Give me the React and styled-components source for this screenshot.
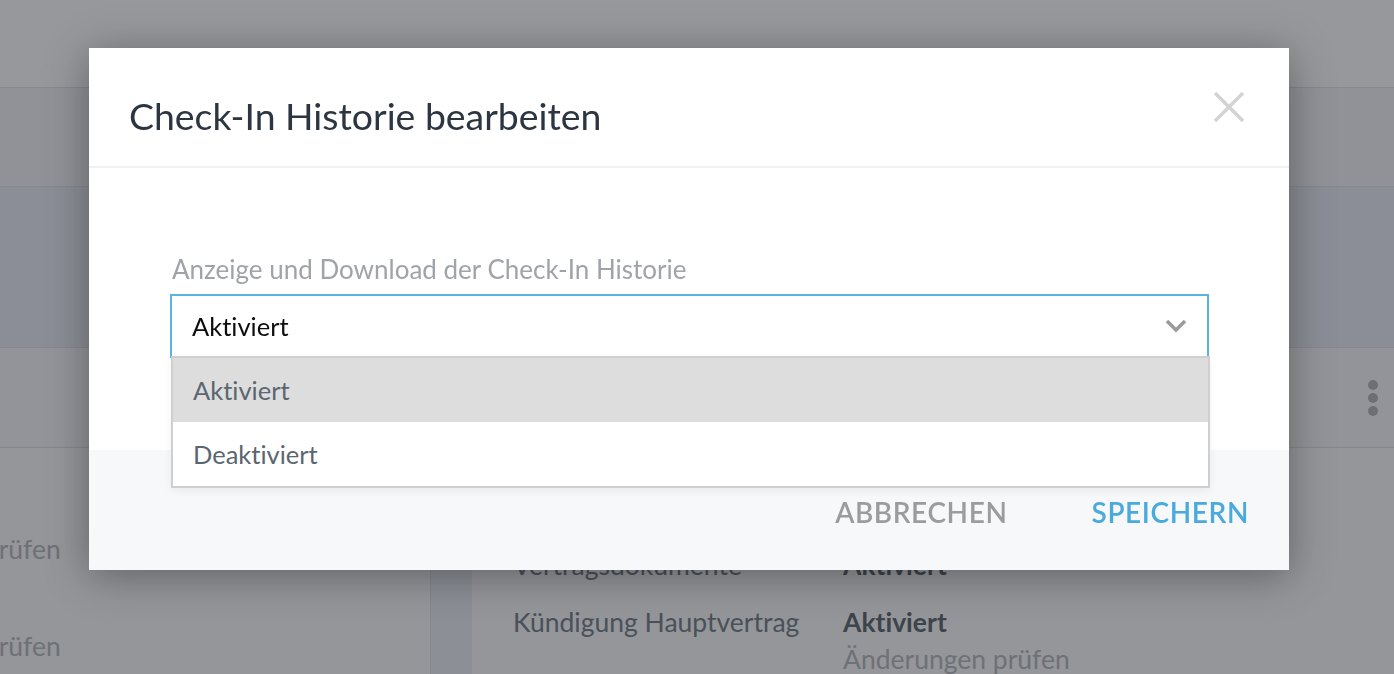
import React from 'react';
import styled, { createGlobalStyle } from 'styled-components';

const GlobalStyle = createGlobalStyle`
  html, body {
    margin: 0;
    padding: 0;
    height: 100%;
    overflow: hidden;
  }
  body {
    font-family: Lato, "Liberation Sans", sans-serif;
    font-variant-ligatures: none;
    background: #fafafa;
  }
`;

const Page = styled.div`
  width: 1394px;
  height: 674px;
  overflow: hidden;
  display: flex;
  flex-direction: column;
  background: #fafafa;
`;

const Band = styled.div`
  flex: none;
  height: ${(p) => p.h}px;
  background: ${(p) => p.bg};
  border-bottom: 1px solid #dedee2;
  display: flex;
  align-items: center;
  justify-content: flex-end;
  padding-right: 16px;
  box-sizing: border-box;
`;

const Dots = styled.div`
  display: flex;
  flex-direction: column;
  gap: 3px;

  span {
    width: 10px;
    height: 10px;
    border-radius: 50%;
    background: #acadaf;
  }
`;

const Content = styled.div`
  flex: 1;
  display: grid;
  grid-template-columns: 430px 42px 1fr;
  font-size: 26.5px;
`;

const LeftCol = styled.div`
  overflow: hidden;
  padding-top: 84px;
`;

/* the left table is scrolled sideways, only the end of its cells shows */
const Scrolled = styled.div`
  margin-left: -166px;
  display: flex;
  flex-direction: column;
  gap: 63px;
`;

const Muted = styled.div`
  line-height: 34px;
  color: #afb0b3;
  white-space: nowrap;
`;

const Strip = styled.div`
  background: #eaecf1;
  border-left: 1px solid #dcdee3;
`;

const RightCol = styled.div`
  padding: 100px 0 0 41px;
  display: flex;
  flex-direction: column;
  gap: 23px;
`;

const InfoRow = styled.div`
  display: grid;
  grid-template-columns: 330px 1fr;
  line-height: 34px;
  white-space: nowrap;
`;

const InfoLabel = styled.div`
  color: #697078;
`;

const InfoValue = styled.div`
  color: #4f565c;
  font-weight: 700;
`;

const SubLink = styled.div`
  margin-top: 3px;
  color: #afb0b3;
  font-weight: 400;
`;

const Backdrop = styled.div`
  position: fixed;
  inset: 0;
  background: rgba(45, 50, 58, 0.5);
`;

const Modal = styled.div`
  position: fixed;
  left: 89px;
  top: 48px;
  width: 1200px;
  background: #fff;
  box-shadow: 0 6px 40px rgba(0, 0, 0, 0.35);
`;

const Header = styled.div`
  display: flex;
  align-items: flex-start;
  justify-content: space-between;
  height: 120px;
  padding: 0 44px 0 40px;
  box-sizing: border-box;
  border-bottom: 2px solid #f1f1f1;
`;

const Title = styled.h2`
  margin: 48px 0 0;
  font-size: 37.4px;
  font-weight: 400;
  color: #2c3540;
  line-height: 40px;
`;

const CloseButton = styled.button`
  border: 0;
  background: none;
  padding: 0;
  margin-top: 43px;
  width: 32px;
  height: 32px;
  cursor: pointer;
`;

const Body = styled.div`
  padding: 86px 80px 92px 81px;
`;

const FieldLabel = styled.div`
  font-size: 26px;
  line-height: 30px;
  color: #a0a3a8;
  margin-bottom: 10px;
  padding-left: 2px;
`;

const SelectBox = styled.div`
  position: relative;
  height: 64px;
  box-sizing: border-box;
  border: 2px solid #5ab4e0;
  display: flex;
  align-items: center;
  justify-content: space-between;
  padding: 0 20px;
  font-size: 25.5px;
  color: #0d0d0d;
`;

const Menu = styled.div`
  position: absolute;
  left: -1px;
  right: -3px;
  top: 100%;
  background: #fff;
  border: 2px solid #cfcfcf;
  box-shadow: 0 3px 8px rgba(0, 0, 0, 0.06);
  z-index: 2;
`;

const Option = styled.div`
  height: 64px;
  display: flex;
  align-items: center;
  padding: 0 20px;
  font-size: 25.5px;
  color: #5b6670;
  background: ${(p) => (p.active ? '#dddddd' : '#fff')};
`;

const Footer = styled.div`
  height: 120px;
  background: #f7f8fa;
  display: flex;
  justify-content: flex-end;
  align-items: flex-start;
  gap: 84px;
  padding: 44px 40px 0 0;
  box-sizing: border-box;
`;

const TextButton = styled.button`
  border: 0;
  background: none;
  padding: 0;
  font-family: inherit;
  font-size: 28px;
  font-weight: 600;
  letter-spacing: 0.6px;
  line-height: 36px;
  color: ${(p) => (p.primary ? '#4aa9dd' : '#9a9ca0')};
  cursor: pointer;
`;

export default function App() {
  return (
    <>
      <GlobalStyle />
      <Page>
        <Band h={88} bg="#ffffff" />
        <Band h={99} bg="#f3f2f4" />
        <Band h={161} bg="#e9eaf2" />
        <Band h={100} bg="#f8f7f8">
          <Dots>
            <span />
            <span />
            <span />
          </Dots>
        </Band>
        <Content>
          <LeftCol>
            <Scrolled>
              <Muted>Änderungen prüfen</Muted>
              <Muted>Änderungen prüfen</Muted>
            </Scrolled>
          </LeftCol>
          <Strip />
          <RightCol>
            <InfoRow>
              <InfoLabel>Vertragsdokumente</InfoLabel>
              <InfoValue>Aktiviert</InfoValue>
            </InfoRow>
            <InfoRow>
              <InfoLabel>Kündigung Hauptvertrag</InfoLabel>
              <InfoValue>
                Aktiviert
                <SubLink>Änderungen prüfen</SubLink>
              </InfoValue>
            </InfoRow>
          </RightCol>
        </Content>
      </Page>
      <Backdrop />
      <Modal>
        <Header>
          <Title>Check-In Historie bearbeiten</Title>
          <CloseButton aria-label="Schließen">
            <svg width="32" height="32" viewBox="0 0 32 32">
              <path d="M2 2 L30 30 M30 2 L2 30" stroke="#d3d3d3" strokeWidth="3.5" fill="none" />
            </svg>
          </CloseButton>
        </Header>
        <Body>
          <FieldLabel>Anzeige und Download der Check-In Historie</FieldLabel>
          <SelectBox>
            <span>Aktiviert</span>
            <svg width="22" height="14" viewBox="0 0 22 14">
              <path d="M2 2 L11 11 L20 2" stroke="#9b9b9b" strokeWidth="3.5" fill="none" />
            </svg>
            <Menu>
              <Option active>Aktiviert</Option>
              <Option>Deaktiviert</Option>
            </Menu>
          </SelectBox>
        </Body>
        <Footer>
          <TextButton>ABBRECHEN</TextButton>
          <TextButton primary>SPEICHERN</TextButton>
        </Footer>
      </Modal>
    </>
  );
}
